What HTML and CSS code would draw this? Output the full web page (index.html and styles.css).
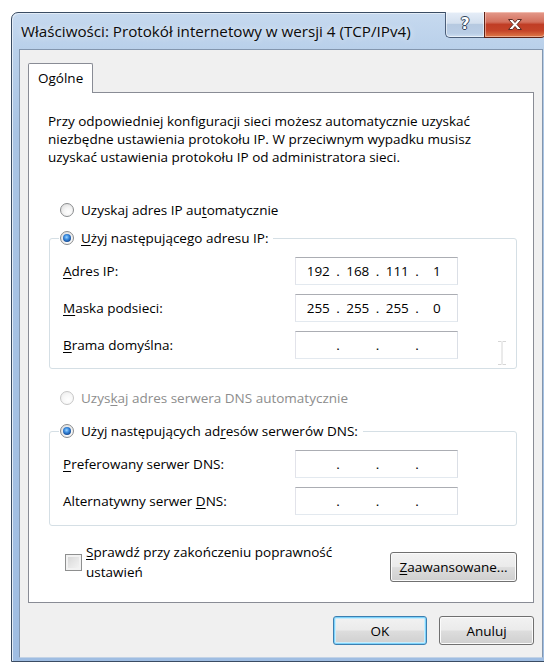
FILE: index.html
```html
<!DOCTYPE html>
<html lang="pl">
<head>
<meta charset="utf-8">
<title>Właściwości: Protokół internetowy w wersji 4 (TCP/IPv4)</title>
<link rel="stylesheet" href="styles.css">
</head>
<body>
<div class="window">
  <div class="titlebar">
    <span class="caption">Właściwości: Protokół internetowy w wersji 4 (TCP/IPv4)</span>
    <div class="caption-buttons">
      <button class="cap-btn help" type="button"><span class="help-glyph">?</span></button>
      <button class="cap-btn close" type="button">
        <svg width="16" height="13" viewBox="0 0 16 13">
          <path d="M1.5 1.5h4l2.5 3 2.5-3h4l-4.5 5 4.5 5h-4L8 8.5l-2.5 3h-4l4.5-5z" fill="#fff" stroke="#5a2a22" stroke-width="1" stroke-linejoin="round"/>
        </svg>
      </button>
    </div>
  </div>

  <div class="client">
    <div class="tabs">
      <div class="tab">Ogólne</div>
    </div>

    <div class="panel">
      <p class="intro">Przy odpowiedniej konfiguracji sieci możesz automatycznie uzyskać<br>niezbędne ustawienia protokołu IP. W przeciwnym wypadku musisz<br>uzyskać ustawienia protokołu IP od administratora sieci.</p>

      <label class="option first">
        <span class="radio"></span>
        <span>Uzyskaj adres IP au<u>t</u>omatycznie</span>
      </label>

      <fieldset class="group">
        <legend>
          <label class="option">
            <span class="radio checked"></span>
            <span><u>U</u>żyj następującego adresu IP:</span>
          </label>
        </legend>
        <div class="fields">
          <span class="field-label"><u>A</u>dres IP:</span>
          <div class="ip">
            <span class="oct">192</span><span class="dot">.</span><span class="oct">168</span><span class="dot">.</span><span class="oct">111</span><span class="dot">.</span><span class="oct">1</span>
          </div>
          <span class="field-label"><u>M</u>aska podsieci:</span>
          <div class="ip">
            <span class="oct">255</span><span class="dot">.</span><span class="oct">255</span><span class="dot">.</span><span class="oct">255</span><span class="dot">.</span><span class="oct">0</span>
          </div>
          <span class="field-label"><u>B</u>rama domyślna:</span>
          <div class="ip">
            <span class="oct"></span><span class="dot">.</span><span class="oct"></span><span class="dot">.</span><span class="oct"></span><span class="dot">.</span><span class="oct"></span>
          </div>
        </div>
        <svg class="ibeam" width="10" height="24" viewBox="0 0 10 24">
          <path d="M1 0.5h3.5M5.5 0.5H9M5 1v22M1 23.5h3.5M5.5 23.5H9" stroke="#d6d6d6" stroke-width="1" fill="none"/>
        </svg>
      </fieldset>

      <label class="option disabled dns-auto">
        <span class="radio"></span>
        <span>Uzys<u>k</u>aj adres serwera DNS automatycznie</span>
      </label>

      <fieldset class="group dns">
        <legend>
          <label class="option">
            <span class="radio checked"></span>
            <span>Użyj następujących ad<u>r</u>esów serwerów DNS:</span>
          </label>
        </legend>
        <div class="fields">
          <span class="field-label"><u>P</u>referowany serwer DNS:</span>
          <div class="ip">
            <span class="oct"></span><span class="dot">.</span><span class="oct"></span><span class="dot">.</span><span class="oct"></span><span class="dot">.</span><span class="oct"></span>
          </div>
          <span class="field-label">Alternatywny serwer <u>D</u>NS:</span>
          <div class="ip">
            <span class="oct"></span><span class="dot">.</span><span class="oct"></span><span class="dot">.</span><span class="oct"></span><span class="dot">.</span><span class="oct"></span>
          </div>
        </div>
      </fieldset>

      <div class="bottom-row">
        <label class="check-option">
          <span class="checkbox"></span>
          <span class="check-text"><u>S</u>prawdź przy zakończeniu poprawność<br>ustawień</span>
        </label>
        <button class="btn advanced" type="button"><u>Z</u>aawansowane...</button>
      </div>
    </div>

    <div class="dialog-buttons">
      <button class="btn default" type="button">OK</button>
      <button class="btn" type="button">Anuluj</button>
    </div>
  </div>
</div>
</body>
</html>
```

FILE: styles.css
```css
* { box-sizing: border-box; }

html, body {
  margin: 0;
  width: 544px;
  height: 662px;
  overflow: hidden;
  background: #fff;
}

body {
  font-family: "Open Sans", "Noto Sans", sans-serif;
  font-size: 13.5px;
  color: #000;
}

u { text-decoration-thickness: 1px; text-underline-offset: 2px; }

/* ---------- window frame ---------- */
.window {
  margin: 12px 0 0 11px;
  width: 541px;
  height: 650px;
  border: 1px solid #3a4c63;
  border-radius: 7px 7px 0 0;
  background: linear-gradient(to bottom, #c6d9ef 0, #b9d0ea 36px, #a9c4e4 120px, #9fbde2 100%);
  box-shadow: inset 1px 1px 0 #e2ecf7, inset -1px 0 0 #e2ecf7;
  display: flex;
  flex-direction: column;
  padding-bottom: 3px;
}

.titlebar {
  height: 36px;
  display: flex;
  align-items: flex-start;
  padding-left: 9px;
}

.caption {
  flex: 1;
  font-size: 15.2px;
  line-height: 37px;
  color: #0b0b0b;
  text-shadow: 0 0 6px rgba(255, 255, 255, 0.9);
  white-space: nowrap;
}

.caption-buttons {
  display: flex;
  margin-top: -1px;
  margin-right: 5px;
}

.cap-btn {
  height: 26px;
  padding: 0;
  border: 1px solid #4a5d78;
  border-top: none;
  display: flex;
  align-items: center;
  justify-content: center;
  font: inherit;
}

.cap-btn.help {
  width: 39px;
  border-radius: 0 0 0 5px;
  border-right: none;
  background: linear-gradient(to bottom, #e6eef8 0, #d3dfee 45%, #b6c9e0 50%, #b9cde5 85%, #cfe0f3 100%);
  box-shadow: inset 0 0 0 1px rgba(255, 255, 255, 0.55);
}

.help-glyph {
  font-family: "DejaVu Sans", sans-serif;
  font-weight: bold;
  font-size: 15px;
  line-height: 1;
  color: #fff;
  text-shadow: 0 0 1px #33455e, 1px 0 0 #33455e, -1px 0 0 #33455e, 0 1px 0 #33455e, 0 -1px 0 #33455e;
}

.cap-btn.close {
  width: 62px;
  border-radius: 0 0 5px 0;
  border-color: #5d2116;
  background: linear-gradient(to bottom, #e49a8b 0, #d3705d 40%, #c03d25 50%, #c54429 75%, #df7a49 100%);
  box-shadow: inset 0 0 0 1px rgba(255, 220, 210, 0.5);
}

/* ---------- client area ---------- */
.client {
  flex: 1;
  margin: 0 8px 0 7px;
  border: 1px solid #8396ae;
  border-bottom-color: #c3d3e6;
  background: #f0f0f0;
  padding: 13px 8px 12px 8px;
  display: flex;
  flex-direction: column;
}

.tabs {
  display: flex;
  height: 29px;
}

.tab {
  position: relative;
  z-index: 1;
  height: 30px;
  padding: 0 9px;
  border: 1px solid #898c95;
  border-bottom: none;
  border-radius: 2px 2px 0 0;
  background: #fff;
  line-height: 28px;
}

.panel {
  height: 511px;
  border: 1px solid #898c95;
  background: #fff;
  padding: 19px 16px 19px 20px;
  display: flex;
  flex-direction: column;
}

.intro {
  margin: 0 0 0 -1px;
  line-height: 18px;
  white-space: nowrap;
}

/* ---------- radio buttons ---------- */
.option {
  display: flex;
  align-items: center;
  gap: 7px;
  height: 20px;
  white-space: nowrap;
}

.option.first { margin: 34px 0 0 11px; }
.option.dns-auto { margin: 19px 0 0 11px; }
.option.disabled { color: #8d8d8d; }

.radio {
  width: 14px;
  height: 14px;
  flex: none;
  border-radius: 50%;
  border: 1px solid #8a8c8e;
  background: radial-gradient(circle at 60% 65%, #ffffff 0, #f4f4f4 40%, #d6d6d6 100%);
  display: flex;
  align-items: center;
  justify-content: center;
}

.radio.checked::after {
  content: "";
  width: 8px;
  height: 8px;
  border-radius: 50%;
  background: radial-gradient(circle at 45% 40%, #9fd6ff 0, #3d8de0 35%, #174f9a 70%, #0c2f62 100%);
}

.option.disabled .radio {
  border-color: #c6c6c6;
  background: radial-gradient(circle at 60% 65%, #ffffff 0, #f7f7f7 50%, #e8e8e8 100%);
}

/* ---------- group boxes ---------- */
.group {
  position: relative;
  margin: 8px 0 0 0;
  padding: 9px 0 9px 13px;
  border: 1px solid #d5dfe5;
  border-radius: 3px;
  min-inline-size: 0;
}

.group.dns { margin-top: 13px; padding-bottom: 10px; }

.group legend {
  margin-left: -4px;
  padding: 0 5px 0 1px;
}

.fields {
  display: grid;
  grid-template-columns: 232px 163px;
  grid-auto-rows: 28px;
  row-gap: 9px;
  align-items: center;
}

.field-label { white-space: nowrap; }

.ip {
  height: 28px;
  display: flex;
  align-items: center;
  padding-left: 5px;
  border: 1px solid;
  border-color: #abadb3 #dbdfe6 #e3e9ef #e2e3ea;
  background: #fff;
}

.oct {
  width: 34.5px;
  text-align: center;
}

.dot {
  width: 5px;
  text-align: center;
}

.ibeam {
  position: absolute;
  left: 447px;
  top: 93px;
}

/* ---------- bottom of the tab page ---------- */
.bottom-row {
  margin-top: 16px;
  display: flex;
  align-items: flex-end;
  justify-content: space-between;
}

.check-option {
  display: flex;
  align-items: center;
  gap: 4px;
  margin-left: 16px;
}

.checkbox {
  width: 17px;
  height: 17px;
  flex: none;
  border: 1px solid #8e8f8f;
  background: linear-gradient(135deg, #d2d2d2 0, #e6e6e6 50%, #f6f6f6 100%);
  box-shadow: inset 0 0 0 2px #f2f2f2;
}

.check-text { line-height: 20px; }

/* ---------- push buttons ---------- */
.btn {
  height: 29px;
  padding: 0;
  font: inherit;
  color: #000;
  border: 1px solid #707070;
  border-radius: 3px;
  background: linear-gradient(to bottom, #f2f2f2 0, #ebebeb 48%, #dddddd 52%, #cfcfcf 100%);
  box-shadow: inset 0 0 0 1px #fbfbfb;
}

.btn.advanced {
  width: 127px;
  height: 30px;
}

.dialog-buttons {
  margin-top: 13px;
  display: flex;
  justify-content: flex-end;
  gap: 12px;
}

.dialog-buttons .btn { width: 95px; }
.dialog-buttons .btn.default { width: 94px; }

.btn.default {
  border-color: #3c7fb1;
  box-shadow: inset 0 0 0 1px #7ed3fa, inset 0 0 0 2px #c9ecfc;
}
```
